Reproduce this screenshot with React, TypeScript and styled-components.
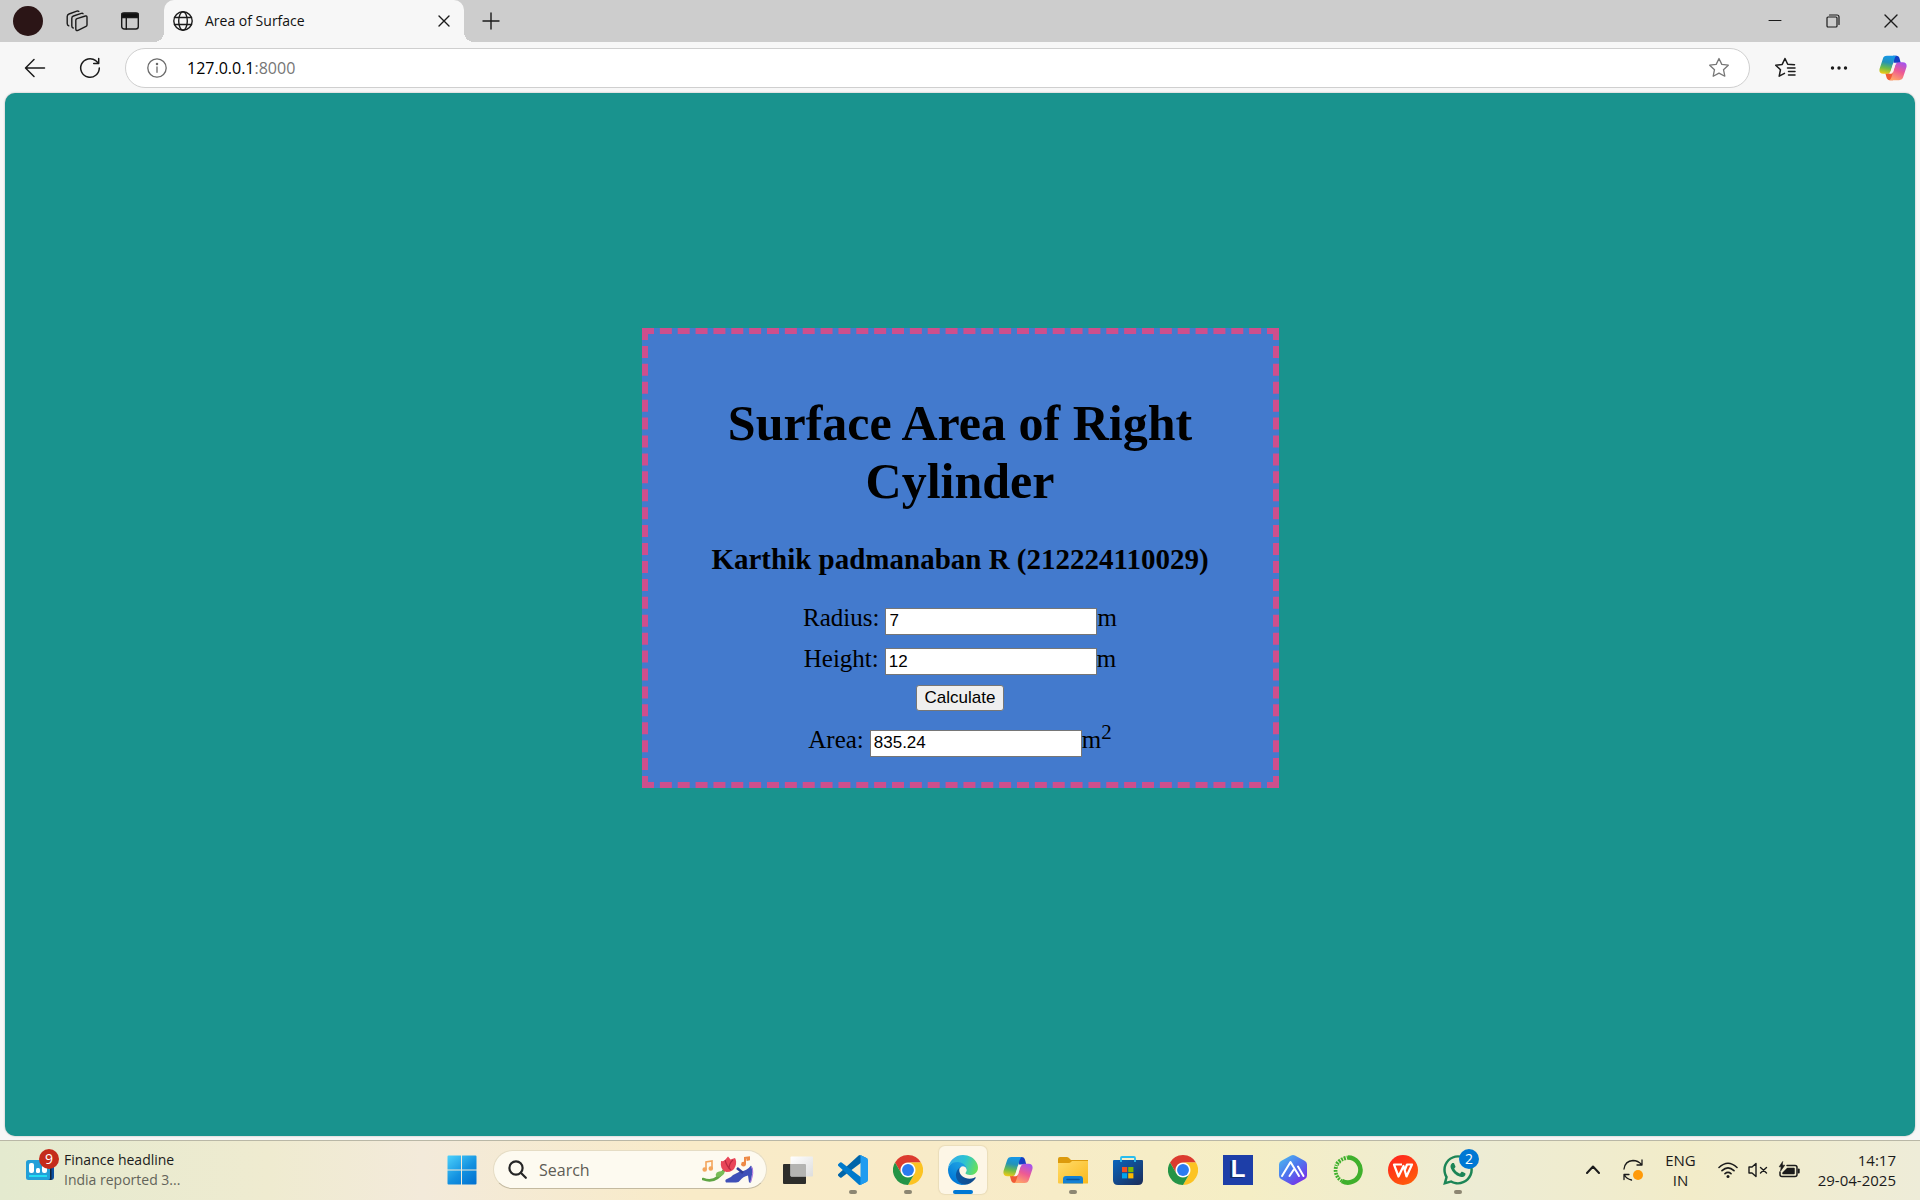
import React, { useId, useState } from "react";
import styled, { createGlobalStyle } from "styled-components";
import { FaWhatsapp } from "react-icons/fa";

const GlobalStyle = createGlobalStyle`
  * { box-sizing: border-box; }
  body { margin: 0; }
  button { border: 0; padding: 0; background: none; color: inherit; font: inherit; }
  svg { display: block; flex: none; }
`;

const uiFont = `"Open Sans", "Noto Sans", sans-serif`;

/* ---------- shell ---------- */

const Screen = styled.div`
  min-height: 100vh;
  display: flex;
  flex-direction: column;
  background: #f7f7f7;
  color: #1b1b1b;
  font-family: ${uiFont};
  font-size: 14px;
`;

const TabStrip = styled.header`
  height: 42px;
  display: flex;
  align-items: center;
  background: #cdcdcd;
`;

const StripTools = styled.div`
  width: 164px;
  padding-left: 13px;
  display: flex;
  align-items: center;
  gap: 23px;
`;

const Avatar = styled.button`
  width: 30px;
  height: 30px;
  border-radius: 50%;
  background: #2b1516;
`;

const IconButton = styled.button<{ $width: number }>`
  width: ${(p) => p.$width}px;
  height: 36px;
  flex: none;
  display: flex;
  align-items: center;
  justify-content: center;
`;

const Tab = styled.div`
  position: relative;
  width: 300px;
  align-self: stretch;
  padding: 0 9px;
  display: flex;
  align-items: center;
  background: #f7f7f7;
  border-radius: 10px 10px 0 0;
  color: #111;

  &::before,
  &::after {
    content: "";
    position: absolute;
    bottom: 0;
    width: 10px;
    height: 10px;
  }
  &::before {
    right: 100%;
    background: radial-gradient(circle at 0 0, #cdcdcd 10px, #f7f7f7 10px);
  }
  &::after {
    left: 100%;
    background: radial-gradient(circle at 100% 0, #cdcdcd 10px, #f7f7f7 10px);
  }
`;

const TabTitle = styled.span`
  flex: 1;
  margin-left: 12px;
  line-height: 20px;
`;

const WindowControls = styled.div`
  margin-left: auto;
  display: flex;
`;

const Toolbar = styled.nav`
  height: 51px;
  padding-left: 7px;
  display: flex;
  align-items: center;
`;

const AddressBar = styled.div`
  flex: 1;
  height: 40px;
  margin-left: 8px;
  padding: 0 12px 0 14px;
  display: flex;
  align-items: center;
  background: #fff;
  border: 1px solid #cfcfcf;
  border-radius: 20px;
`;

const Address = styled.span`
  flex: 1;
  margin-left: 13px;
  font-size: 16px;
  line-height: 24px;
  color: #000;
`;

const Port = styled.span`
  color: #767676;
`;

const ToolbarEnd = styled.div`
  padding-left: 8px;
  display: flex;
`;

/* ---------- web page ---------- */

const Viewport = styled.main`
  flex: 1;
  margin: 0 5px 4px;
  padding: 235px 20px 40px;
  background: #19938e;
  border-radius: 10px;
  box-shadow: 0 0 2px rgba(0, 0, 0, 0.3);
  font-family: "Liberation Serif", serif;
  font-size: 25px;
  line-height: 28px;
  color: #000;
`;

const Card = styled.form`
  max-width: 637px;
  margin: 0 auto;
  padding: 60px 25px 25px;
  display: flex;
  flex-direction: column;
  align-items: center;
  text-align: center;
  background: #437acd;
  border: 6px dashed #cd4f8d;
`;

const Title = styled.h1`
  margin: 0 0 32px;
  font-size: 50px;
  line-height: 58px;
`;

const Author = styled.h3`
  margin: 0 0 28px;
  font-size: 29px;
  line-height: 34px;
`;

const Row = styled.div`
  margin-bottom: 10px;
  display: flex;
  align-items: baseline;

  &:last-child { margin-bottom: 0; }
`;

const FieldLabel = styled.label`
  margin-right: 6px;
`;

const Field = styled.input`
  width: 212px;
  height: 27px;
  padding: 0 3px;
  border: 1px solid #767676;
  border-radius: 0;
  background: #fff;
  color: #000;
  font-family: "Liberation Sans", sans-serif;
  font-size: 17px;
`;

const Submit = styled.button`
  height: 26px;
  margin-bottom: 15px;
  padding: 0 8px;
  border: 1px solid #767676;
  border-radius: 3px;
  background: #efefef;
  color: #000;
  font-family: "Liberation Sans", sans-serif;
  font-size: 17px;
  line-height: 20px;
`;

const Sup = styled.sup`
  font-size: 21px;
  line-height: 0;
`;

/* ---------- taskbar ---------- */

const Taskbar = styled.footer`
  height: 60px;
  padding-bottom: 2px;
  display: grid;
  grid-template-columns: 1fr auto 1fr;
  align-items: center;
  border-top: 1px solid #b9b7a6;
  background: linear-gradient(90deg, #e4eacf 0%, #efebd0 14%, #f3eada 22%, #f9ebc8 36%, #f8ebc8 50%, #f5eec5 65%, #edecd4 77%, #f2ecc9 88%, #eeecd8 100%);
`;

const Widget = styled.button`
  justify-self: start;
  margin-left: 26px;
  display: flex;
  align-items: center;
  gap: 10px;
  text-align: left;
  line-height: 20px;
`;

const WidgetArt = styled.span`
  position: relative;
  width: 28px;
`;

const Badge = styled.span<{ $color: string }>`
  position: absolute;
  top: -11px;
  right: -5px;
  width: 20px;
  height: 20px;
  border-radius: 50%;
  background: ${(p) => p.$color};
  color: #fff;
  font-size: 14px;
  line-height: 20px;
  text-align: center;
`;

const Muted = styled.span`
  color: #63645a;
`;

const Stack = styled.span<{ $align: string }>`
  display: flex;
  flex-direction: column;
  align-items: ${(p) => p.$align};
  line-height: 20px;
`;

const Apps = styled.div`
  display: flex;
  align-items: center;
  gap: 7px;
`;

const SearchBox = styled.label`
  width: 274px;
  height: 39px;
  padding: 0 12px 0 14px;
  display: flex;
  align-items: center;
  gap: 12px;
  background: #fdfaf0;
  border: 1px solid #e5dcc4;
  border-bottom-color: #c4baa0;
  border-radius: 20px;
`;

const SearchInput = styled.input`
  flex: 1;
  min-width: 0;
  padding: 0;
  border: 0;
  outline: 0;
  background: none;
  font-family: ${uiFont};
  font-size: 16px;
  &::placeholder { color: #5e5c55; opacity: 1; }
`;

const AppTile = styled.button<{ $active?: boolean }>`
  position: relative;
  width: 48px;
  height: 48px;
  display: flex;
  align-items: center;
  justify-content: center;
  border-radius: 6px;
  background: ${(p) => (p.$active ? "#fdf6e6" : "transparent")};
  box-shadow: ${(p) => (p.$active ? "0 0 1px 1px rgba(120, 100, 60, 0.1)" : "none")};
`;

const AppArt = styled.span`
  position: relative;
`;

const RunMark = styled.span<{ $active?: boolean }>`
  position: absolute;
  bottom: 0;
  left: 50%;
  width: ${(p) => (p.$active ? 20 : 8)}px;
  height: 4px;
  transform: translateX(-50%);
  border-radius: 2px;
  background: ${(p) => (p.$active ? "#0078d4" : "#8c8672")};
`;

const AppBadge = styled(Badge)`
  top: -4px;
  right: -4px;
`;

const Tray = styled.div`
  justify-self: end;
  padding-right: 24px;
  display: flex;
  align-items: center;
`;

const TrayButton = styled.button`
  height: 48px;
  display: flex;
  align-items: center;
  gap: 10px;
  font-size: 15px;
`;

const Language = styled(TrayButton)`
  margin: 0 22px;
`;

const Sync = styled(TrayButton)`
  margin-left: 23px;
`;

const Clock = styled(TrayButton)`
  margin-left: 18px;
`;

/* ---------- icons ---------- */

type LineProps = { w: number; h?: number; color?: string; sw?: number; children: React.ReactNode };

const Line = ({ w, h = w, color = "#1b1b1b", sw = 1.4, children }: LineProps) => (
  <svg width={w} height={h} viewBox={`0 0 ${w} ${h}`} fill="none" stroke={color} strokeWidth={sw} strokeLinecap="round" strokeLinejoin="round" aria-hidden="true">
    {children}
  </svg>
);

const WorkspacesIcon = () => (
  <Line w={22} sw={1.4}>
    <path d="M11 8.6 19.4 6Q21 5.6 21 7.2V15q0 1-1 1.4L12 20.3Q9.8 21 9.8 19V10.3Q9.8 9 11 8.6Z" />
    <path d="M17 3.7Q16.5 3 15.3 3.4L7.5 6Q5.8 6.6 5.8 8.2V16q0 1.6 1.4 2" />
    <path d="M12.8 1.3Q12 .8 10.8 1.2L3 4Q1.2 4.7 1.2 6.4V13.5q0 1.8 1.6 2.3" />
  </Line>
);

const VerticalTabsIcon = () => (
  <Line w={20} sw={1.4}>
    <rect x="1.7" y="2" width="16.6" height="16" rx="2.5" />
    <path d="M2 2.500h16v4H2z" fill="#111" />
    <path d="M6.300 7v11" />
  </Line>
);

const GlobeIcon = () => (
  <Line w={20} sw={1.4}>
    <circle cx="10" cy="10" r="9.2" />
    <ellipse cx="10" cy="10" rx="4.3" ry="9.2" />
    <path d="M1.500 6.500h17M1.500 13.500h17" />
  </Line>
);

const CloseIcon = ({ size }: { size: number }) => (
  <Line w={size} sw={1.4}><path d={`M1 1 ${size - 1} ${size - 1}M${size - 1} 1 1 ${size - 1}`} /></Line>
);

const PlusIcon = () => <Line w={18}><path d="M9 1v16M1 9h16" /></Line>;
const MinimizeIcon = () => <Line w={14} sw={1}><path d="M1 6.500h12" /></Line>;
const RestoreIcon = () => (
  <Line w={14} sw={1.2}><rect x="1" y="3" width="10" height="10" rx="1" /><path d="M3.500 1H11q2 0 2 2v7.500" /></Line>
);
const BackIcon = () => <Line w={22} sw={1.5}><path d="M20.500 11H2M10 2.500 1.500 11l8.500 8.500" /></Line>;
const ReloadIcon = () => (
  <Line w={22} sw={1.5}><path d="M20.300 11A9.300 9.300 0 1 1 16.800 3.700L19.600 6.300M19.700 1.500v5h-5" /></Line>
);
const InfoIcon = () => (
  <Line w={20} color="#6b6b6b" sw={1.3}>
    <circle cx="10" cy="10" r="9.2" /><path d="M10 9v5.300" /><circle cx="10" cy="6" r=".6" fill="#6b6b6b" />
  </Line>
);
const StarIcon = () => (
  <Line w={22} color="#777" sw={1.3}>
    <path d="m11 1.500 2.800 5.900 6.500.8-4.800 4.500 1.300 6.500L11 16.100l-5.800 3.100 1.300-6.500L1.700 8.200l6.500-.8Z" />
  </Line>
);
const FavoritesIcon = () => (
  <Line w={22} sw={1.5}>
    <path d="M20.500 7.800 13.700 7.200 11 1.500 8.200 7.400 1.700 8.200l4.800 4.500-1.300 6.500L10.500 16.300M13.500 11h7.500M14.500 14.500H21M14.500 18H21" />
  </Line>
);
const DotsIcon = () => (
  <svg width="18" height="6" viewBox="0 0 18 6" fill="#1b1b1b" aria-hidden="true">
    <circle cx="2.5" cy="3" r="1.7" /><circle cx="9" cy="3" r="1.7" /><circle cx="15.5" cy="3" r="1.7" />
  </svg>
);

const CopilotIcon = ({ size = 30 }: { size?: number }) => {
  const id = useId();
  return (
    <svg width={size} height={size} viewBox="0 0 30 30" aria-hidden="true">
      <defs>
        <linearGradient id={`${id}a`} x1="10" y1="2" x2="6" y2="22" gradientUnits="userSpaceOnUse">
          <stop offset="0" stopColor="#1597e8" /><stop offset=".35" stopColor="#2393b8" /><stop offset=".65" stopColor="#6cbb4a" /><stop offset="1" stopColor="#ffcb10" />
        </linearGradient>
        <linearGradient id={`${id}b`} x1="25" y1="9" x2="17" y2="28" gradientUnits="userSpaceOnUse">
          <stop offset="0" stopColor="#a553ec" /><stop offset=".5" stopColor="#ee5a93" /><stop offset="1" stopColor="#ffa368" />
        </linearGradient>
      </defs>
      <path d="M15 2h3.500c2.200 0 3 1 3.600 3l1.300 5h-4c-2 0-3 1-3.500 3Z" fill="#153fc4" />
      <path d="M15 28h-3.400c-2.200 0-3-1-3.600-3l-1.200-4.500H12c2 0 2.500-1 3-3Z" fill="#f05b35" />
      <path d="M8.500 2H19c-1.500.5-2 2-2.500 3.500L12.600 18c-.7 2.200-1.800 3.200-4 3.200H4.500C1 21.200-.2 18.800.7 15.500L4 5.500C4.700 3 6 2 8.500 2Z" fill={`url(#${id}a)`} />
      <path d="M21.500 28H11c1.500-.5 2-2 2.500-3.500L17.400 12c.7-2.200 1.800-3.200 4-3.200h4.100c3.500 0 4.700 2.400 3.800 5.700L26 24.500C25.300 27 24 28 21.500 28Z" fill={`url(#${id}b)`} />
      <path d="M15.500 9.500h4.300q-2 .5-2.600 2.500l-2.300 7.500q-.6 1.700-2.200 1.700h-2.500q1.800-.6 2.400-2.200Z" fill="#f9f4ee" />
    </svg>
  );
};

const WidgetIcon = () => (
  <svg width="28" height="20" viewBox="0 0 28 20" aria-hidden="true">
    <rect x="12" width="16" height="20" rx="3" fill="#0b4fa0" />
    <rect width="24" height="20" rx="2.5" fill="#249fd8" />
    <path d="M24 8h1.500v12H24z" fill="#10243a" />
    <rect x="3" y="3" width="5" height="10" rx="2" fill="#fff" /><rect x="10" y="8" width="4" height="5" rx="1.5" fill="#fff" /><rect x="16" y="5" width="5" height="8" rx="2" fill="#fff" />
    <path d="M3 15h18v2H3z" fill="#22dcf3" />
  </svg>
);

const WindowsIcon = () => {
  const id = useId();
  return (
    <svg width="30" height="30" viewBox="0 0 30 30" aria-hidden="true">
      <linearGradient id={id} x1="0" y1="0" x2="24" y2="30" gradientUnits="userSpaceOnUse"><stop stopColor="#4ed3fc" /><stop offset=".6" stopColor="#1391e0" /><stop offset="1" stopColor="#0474d2" /></linearGradient>
      <path d="M1.500.5H14v14H.5v-13q0-1 1-1ZM15 .5h13.500q1 0 1 1v13H15ZM.5 15.500H14v14H1.500q-1 0-1-1ZM15 15.500h14.500v13q0 1-1 1H15Z" fill={`url(#${id})`} />
    </svg>
  );
};

const SearchIcon = () => (
  <Line w={19} sw={2.2} color="#252525"><circle cx="8" cy="8" r="6.6" /><path d="m12.800 12.800 5 5" /></Line>
);

const SearchArt = () => (
  <svg width="52" height="28" viewBox="0 0 52 28" aria-hidden="true">
    <g fill="#f3a55c" stroke="#f3a55c" strokeWidth="1.6"><path d="M4 13V6l6-1v7" fill="none" /><circle cx="2.7" cy="13.5" r="1.5" /><circle cx="8.8" cy="12.5" r="1.5" /></g>
    <path d="M43 8V2l4-.5v2l-2.500.4" fill="none" stroke="#ee8a45" strokeWidth="2" /><circle cx="41.5" cy="8.2" r="2.4" fill="#ee8a45" />
    <path d="M1 23q13 5 21-9" fill="none" stroke="#5fa544" strokeWidth="2.6" strokeLinecap="round" />
    <path d="M14 21q-2-7 9-6-1 6-9 6Z" fill="#78bd58" />
    <path d="M19 5q3 .5 4-1l3-3.500 2.500 3L33 2q2 3 .5 8-2 6-9 6-7-2-5.500-11Z" fill="#e94658" />
    <path d="M23 4q2 7 6 10M31 4q-4 3-4 9" fill="none" stroke="#b9273f" strokeWidth="1.2" />
    <path d="M31 19 38 15.500Q45 15 49 9.500q3 4 1 9l-1 8h-2l-1-7q-5 1-8 5-1 2-4 2H24q-2-3 2-4 3-1 5-3.500Z" fill="#3f50b8" />
    <path d="m35 12 6 5" stroke="#303b95" strokeWidth="2.5" /><path d="M49.500 11q3 5-1 15" fill="none" stroke="#b47ae0" strokeWidth="1" />
  </svg>
);

const TaskViewIcon = () => {
  const id = useId();
  return (
    <svg width="30" height="30" viewBox="0 0 30 30" aria-hidden="true">
      <linearGradient id={id} x1="0" y1="0" x2="1" y2="1"><stop stopColor="#fff" /><stop offset="1" stopColor="#ddd" /></linearGradient>
      <rect y="9" width="23" height="20" rx="1" fill="#2d2d2b" />
      <rect x="7.5" y="1.5" width="22.5" height="20" rx="1" fill={`url(#${id})`} />
      <path d="M7.500 9H22q1 0 1 1v11.500H8.500q-1 0-1-1Z" fill="#b4b4b2" />
    </svg>
  );
};

const VsCodeIcon = () => (
  <svg width="30" height="30" viewBox="0 0 100 100" aria-hidden="true">
    <path fill="#0065A9" d="M96.46 10.8 75.86.88a6.23 6.23 0 0 0-7.11 1.2L1.3 63.58a4.17 4.17 0 0 0 0 6.17l5.51 5a4.17 4.17 0 0 0 5.32.24l81.23-61.62c2.73-2.07 6.64-.12 6.64 3.3v-.24a6.25 6.25 0 0 0-3.54-5.63Z" />
    <path fill="#007ACC" d="m96.46 89.2-20.6 9.92a6.23 6.23 0 0 1-7.11-1.2L1.3 36.42a4.17 4.17 0 0 1 0-6.17l5.51-5a4.17 4.17 0 0 1 5.32-.24l81.23 61.62c2.73 2.07 6.64.12 6.64-3.3v.24a6.25 6.25 0 0 1-3.54 5.63Z" />
    <path fill="#1F9CF0" d="M75.86 99.13a6.23 6.23 0 0 1-7.11-1.21C71.06 100.22 75 98.59 75 95.33V4.67c0-3.26-3.94-4.9-6.25-2.59A6.23 6.23 0 0 1 75.86.87l20.6 9.91A6.25 6.25 0 0 1 100 16.41v67.18a6.25 6.25 0 0 1-3.54 5.63Z" />
  </svg>
);

const ChromeIcon = () => (
  <svg width="30" height="30" viewBox="0 0 48 48" aria-hidden="true">
    <circle cx="24" cy="24" r="12" fill="#fff" />
    <path d="M24 12h20.780A23.990 23.990 0 0 0 3.220 12l10.390 18A11.990 11.990 0 0 1 24 12Z" fill="#dc3b2f" />
    <path d="M34.390 30 24 48a23.990 23.990 0 0 0 20.780-36H24a11.990 11.990 0 0 1 10.390 18Z" fill="#fcc323" />
    <path d="M13.610 30 3.220 12A23.990 23.990 0 0 0 24 48l10.390-18a11.990 11.990 0 0 1-20.780 0Z" fill="#249446" />
    <circle cx="24" cy="24" r="9.5" fill="#2b7bf0" />
  </svg>
);

const EdgeIcon = () => {
  const id = useId();
  return (
    <svg width="30" height="30" viewBox="0 0 256 256" aria-hidden="true">
      <defs>
        <linearGradient id={`${id}a`} x1="63" y1="178" x2="241" y2="178" gradientUnits="userSpaceOnUse"><stop stopColor="#0c59a4" /><stop offset="1" stopColor="#114a8b" /></linearGradient>
        <linearGradient id={`${id}b`} x1="140" y1="100" x2="46" y2="222" gradientUnits="userSpaceOnUse"><stop stopColor="#1b9de2" /><stop offset=".3" stopColor="#1595df" /><stop offset="1" stopColor="#0078d7" /></linearGradient>
        <linearGradient id={`${id}c`} x1="20" y1="60" x2="245" y2="140" gradientUnits="userSpaceOnUse"><stop stopColor="#35aee8" /><stop offset=".5" stopColor="#2cc3d2" /><stop offset="1" stopColor="#68e05a" /></linearGradient>
      </defs>
      <g transform="translate(-4.63 -4.92)">
        <path fill={`url(#${id}a)`} d="M235.680 195.460a93.730 93.730 0 0 1-10.540 4.710 101.870 101.870 0 0 1-35.900 6.460c-47.320 0-88.540-32.550-88.540-74.320A31.480 31.480 0 0 1 117.130 105c-42.800 1.800-53.800 46.400-53.800 72.530 0 73.880 68.090 81.370 82.760 81.370 7.910 0 19.840-2.300 27-4.560l1.310-.44a128.340 128.340 0 0 0 66.600-52.800 4 4 0 0 0-5.320-5.640z" />
        <path fill={`url(#${id}b)`} d="M110.340 246.340A79.200 79.200 0 0 1 87.600 225a80.720 80.720 0 0 1 29.530-120c3.120-1.470 8.450-4.130 15.540-4a32.350 32.350 0 0 1 25.690 13 31.880 31.880 0 0 1 6.360 18.660c0-.21 24.460-79.600-80-79.600-43.900 0-80 41.660-80 78.210a130.150 130.150 0 0 0 12.110 56 128 128 0 0 0 156.380 67.110 75.550 75.550 0 0 1-62.780-8z" />
        <path fill={`url(#${id}c)`} d="M156.940 153.780c-.81 1.050-3.300 2.500-3.300 5.660 0 2.610 1.700 5.120 4.720 7.230 14.380 10 41.490 8.680 41.560 8.680a59.560 59.560 0 0 0 30.270-8.350 61.380 61.380 0 0 0 30.430-52.880c.26-22.410-8-37.310-11.340-43.910C228.090 28.760 182.350 4.920 132.610 4.920a128 128 0 0 0-128 126.200c.48-36.540 36.800-66.050 80-66.050 3.500 0 23.460.34 42 10.070 16.340 8.580 24.900 18.940 30.850 29.210 6.180 10.670 7.280 24.150 7.280 29.520s-2.740 13.330-7.800 19.910z" />
      </g>
    </svg>
  );
};

const ExplorerIcon = () => {
  const id = useId();
  return (
    <svg width="30" height="30" viewBox="0 0 30 30" aria-hidden="true">
      <linearGradient id={id} x1="0" y1="0" x2="1" y2="1"><stop stopColor="#ffdb6a" /><stop offset="1" stopColor="#fbb91c" /></linearGradient>
      <path d="M0 4q0-2 2-2h7q1.500 0 2.500 1.500L13 5h17v5H0Z" fill="#dc9a0c" />
      <path d="M0 8h11q1 0 2-1l1-1h16v22q0 .5-1 .5H1q-1 0-1-1Z" fill={`url(#${id})`} />
      <path d="M5 28.500V24q0-3 3-3h14q3 0 3 3v4.500Z" fill="#1480d4" /><path d="M9 24.500h12" stroke="#0b559c" strokeWidth="1.5" strokeLinecap="round" />
    </svg>
  );
};

const StoreIcon = () => {
  const id = useId();
  return (
    <svg width="30" height="30" viewBox="0 0 30 30" aria-hidden="true">
      <linearGradient id={id} x1="0" y1="0" x2="1" y2="1"><stop stopColor="#0a65bd" /><stop offset="1" stopColor="#1c2c58" /></linearGradient>
      <path d="M0 6q0-1 1-1h28q1 0 1 1v19q0 5-5 5H5q-5 0-5-5Z" fill={`url(#${id})`} />
      <path d="M8 7V3q0-1 1-1h12q1 0 1 1v4" fill="none" stroke="#29bdee" strokeWidth="1.8" />
      <path d="M9 12h5.200v5.200H9Z" fill="#f25022" /><path d="M15.200 12h5.200v5.200h-5.200Z" fill="#7fba00" /><path d="M9 18.200h5.200v5.200H9Z" fill="#00a4ef" /><path d="M15.200 18.200h5.200v5.200h-5.200Z" fill="#ffb900" />
    </svg>
  );
};

const LTile = styled.span`
  width: 30px;
  height: 30px;
  display: block;
  background: #1d3ea8;
  color: #fff;
  font: bold 24px/28px "Liberation Sans", sans-serif;
  text-align: center;
  text-shadow: -2px 1px 0 #102a66;
`;

const HexIcon = () => {
  const id = useId();
  return (
    <svg width="30" height="30" viewBox="0 0 30 30" aria-hidden="true">
      <linearGradient id={id} x1="0" y1="0" x2=".8" y2="1"><stop stopColor="#4cc0ef" /><stop offset=".5" stopColor="#4c78ee" /><stop offset="1" stopColor="#7a2be8" /></linearGradient>
      <path d="m13 .6q2-1.100 4 0l10 5.500q2 1.100 2 3.400v11q0 2.300-2 3.400l-10 5.500q-2 1.100-4 0L3 23.900q-2-1.100-2-3.400v-11q0-2.300 2-3.400Z" fill={`url(#${id})`} />
      <path d="m4 21 8.500-14 8.500 14M11.500 21l4-6M20 11.500l5.500 9.500" fill="none" stroke="#fff" strokeWidth="2" strokeLinecap="round" strokeLinejoin="round" />
    </svg>
  );
};

const RingIcon = () => (
  <svg width="30" height="30" viewBox="0 0 30 30" fill="none" stroke="#3fb02c" aria-hidden="true">
    <path d="M15 2.500a12.500 12.500 0 1 1-6 23.500" strokeWidth="4.6" />
    <path d="M9 26A12.500 12.500 0 0 1 3.500 10" strokeWidth="3.5" strokeDasharray="1.8 1.1" />
    <path d="M4 9Q7 4 15 2.500" strokeWidth="4" strokeDasharray="2 1" />
    <path d="M6 22A11 11 0 0 1 8 7" strokeWidth="1.3" strokeDasharray="1 2" />
  </svg>
);

const WpsIcon = () => {
  const id = useId();
  return (
    <svg width="30" height="30" viewBox="0 0 30 30" aria-hidden="true">
      <linearGradient id={id} x1="0" y1="0" x2=".6" y2="1"><stop stopColor="#ff1f20" /><stop offset="1" stopColor="#ff5a0c" /></linearGradient>
      <circle cx="15" cy="15" r="15" fill={`url(#${id})`} />
      <path d="M14 9.500H6l4.500 12L15.500 11l3 10.500L24 9.500h-5l-2 5" fill="none" stroke="#fff" strokeWidth="2.2" strokeLinejoin="round" />
    </svg>
  );
};

const ChevronUpIcon = () => <Line w={14} h={9} sw={2}><path d="m1 8 6-6.500L13 8" /></Line>;
const SyncIcon = () => (
  <Line w={20} h={22} sw={1.3}>
    <path d="M1 10Q2 2 10 1.500q5 0 8.500 4M19 1v5h-5M1 20.500v-5h5M1.500 16q2 4 7 5" />
    <circle cx="15" cy="16" r="5" fill="#ff9a09" stroke="none" />
  </Line>
);
const WifiIcon = () => (
  <Line w={20} h={18} sw={1.6}>
    <path d="M1 6.500q9-8.500 18 0M4 9.700q6-5.500 12 0M7 12.700q3-2.500 6 0" /><circle cx="10" cy="15.5" r="1.5" fill="#1b1b1b" stroke="none" />
  </Line>
);
const MutedIcon = () => (
  <Line w={20} h={16}><path d="M1 5h3l4-3.500v13L4 11H1ZM12.500 5.500l6 5.500M18.500 5.500l-6 5.500" /></Line>
);
const BatteryIcon = () => (
  <Line w={22} h={18} sw={1.5}>
    <path d="M9 4.500h8q2 0 2 2v7q0 2-2 2H4q-2 0-2-2V11" />
    <path d="M9.500 7.500H16v5H5v-.500Z" fill="#1b1b1b" />
    <path d="M20.700 8.500v3" strokeWidth="2" />
    <path d="M4.500.8 1.200 5.800h2L2.500 10.200l4.300-6h-2.300Z" fill="#1b1b1b" strokeWidth=".6" />
  </Line>
);

/* ---------- screen ---------- */

type App = { name: string; icon: React.ReactNode; running?: boolean; active?: boolean; badge?: string };

const apps: App[] = [
  { name: "Task view", icon: <TaskViewIcon /> },
  { name: "Visual Studio Code", icon: <VsCodeIcon />, running: true },
  { name: "Chrome", icon: <ChromeIcon />, running: true },
  { name: "Edge", icon: <EdgeIcon />, running: true, active: true },
  { name: "Copilot", icon: <CopilotIcon /> },
  { name: "File Explorer", icon: <ExplorerIcon />, running: true },
  { name: "Store", icon: <StoreIcon /> },
  { name: "Chrome profile", icon: <ChromeIcon /> },
  { name: "L", icon: <LTile>L</LTile> },
  { name: "Studio", icon: <HexIcon /> },
  { name: "Navigator", icon: <RingIcon /> },
  { name: "WPS Office", icon: <WpsIcon /> },
  { name: "WhatsApp", icon: <FaWhatsapp size={34} color="#1c8556" />, running: true, badge: "2" },
];

export default function App() {
  const [radius, setRadius] = useState("7");
  const [height, setHeight] = useState("12");
  const [area, setArea] = useState("835.24");

  const calculate = (e: React.FormEvent) => {
    e.preventDefault();
    const r = Number(radius);
    const h = Number(height);
    setArea((2 * Math.PI * r * h + 2 * Math.PI * r * r).toFixed(2));
  };

  return (
    <Screen>
      <GlobalStyle />
      <TabStrip>
        <StripTools>
          <Avatar aria-label="Profile" />
          <IconButton $width={22} aria-label="Workspaces"><WorkspacesIcon /></IconButton>
          <IconButton $width={38} aria-label="Tab actions"><VerticalTabsIcon /></IconButton>
        </StripTools>
        <Tab>
          <GlobeIcon />
          <TabTitle>Area of Surface</TabTitle>
          <IconButton $width={22} aria-label="Close tab"><CloseIcon size={12} /></IconButton>
        </Tab>
        <IconButton $width={54} aria-label="New tab"><PlusIcon /></IconButton>
        <WindowControls>
          <IconButton $width={58} aria-label="Minimize"><MinimizeIcon /></IconButton>
          <IconButton $width={58} aria-label="Restore"><RestoreIcon /></IconButton>
          <IconButton $width={58} aria-label="Close"><CloseIcon size={14} /></IconButton>
        </WindowControls>
      </TabStrip>

      <Toolbar>
        <IconButton $width={55} aria-label="Back"><BackIcon /></IconButton>
        <IconButton $width={55} aria-label="Reload"><ReloadIcon /></IconButton>
        <AddressBar>
          <IconButton $width={34} aria-label="Site information"><InfoIcon /></IconButton>
          <Address>127.0.0.1<Port>:8000</Port></Address>
          <IconButton $width={36} aria-label="Add to favorites"><StarIcon /></IconButton>
        </AddressBar>
        <ToolbarEnd>
          <IconButton $width={54} aria-label="Favorites"><FavoritesIcon /></IconButton>
          <IconButton $width={54} aria-label="More"><DotsIcon /></IconButton>
          <IconButton $width={54} aria-label="Copilot"><CopilotIcon size={28} /></IconButton>
        </ToolbarEnd>
      </Toolbar>

      <Viewport>
        <Card onSubmit={calculate}>
          <Title>Surface Area of Right Cylinder</Title>
          <Author>Karthik padmanaban R (212224110029)</Author>
          <Row>
            <FieldLabel htmlFor="radius">Radius:</FieldLabel>
            <Field id="radius" value={radius} onChange={(e) => setRadius(e.target.value)} />
            <span>m</span>
          </Row>
          <Row>
            <FieldLabel htmlFor="height">Height:</FieldLabel>
            <Field id="height" value={height} onChange={(e) => setHeight(e.target.value)} />
            <span>m</span>
          </Row>
          <Submit type="submit">Calculate</Submit>
          <Row>
            <FieldLabel htmlFor="area">Area:</FieldLabel>
            <Field id="area" value={area} readOnly />
            <span>m<Sup>2</Sup></span>
          </Row>
        </Card>
      </Viewport>

      <Taskbar>
        <Widget>
          <WidgetArt><WidgetIcon /><Badge $color="#c42b1c">9</Badge></WidgetArt>
          <Stack $align="flex-start">
            <span>Finance headline</span>
            <Muted>India reported 3...</Muted>
          </Stack>
        </Widget>
        <Apps>
          <AppTile aria-label="Start"><WindowsIcon /></AppTile>
          <SearchBox>
            <SearchIcon />
            <SearchInput placeholder="Search" aria-label="Search" />
            <SearchArt />
          </SearchBox>
          {apps.map((app) => (
            <AppTile key={app.name} aria-label={app.name} $active={app.active}>
              <AppArt>
                {app.icon}
                {app.badge && <AppBadge $color="#0078d4">{app.badge}</AppBadge>}
              </AppArt>
              {app.running && <RunMark $active={app.active} />}
            </AppTile>
          ))}
        </Apps>
        <Tray>
          <TrayButton aria-label="Show hidden icons"><ChevronUpIcon /></TrayButton>
          <Sync aria-label="Update"><SyncIcon /></Sync>
          <Language><Stack $align="center"><span>ENG</span><span>IN</span></Stack></Language>
          <TrayButton aria-label="Quick settings"><WifiIcon /><MutedIcon /><BatteryIcon /></TrayButton>
          <Clock><Stack $align="flex-end"><span>14:17</span><span>29-04-2025</span></Stack></Clock>
        </Tray>
      </Taskbar>
    </Screen>
  );
}
